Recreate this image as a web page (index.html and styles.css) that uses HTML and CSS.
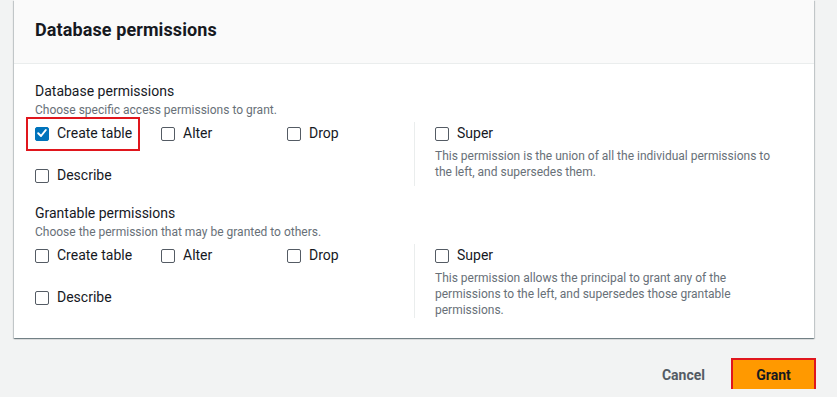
FILE: index.html
```html
<!DOCTYPE html>
<html lang="en">
<head>
<meta charset="utf-8">
<title>Database permissions</title>
<link rel="stylesheet" href="styles.css">
</head>
<body>
<div class="page">
  <section class="card">
    <header class="card-header">
      <h2 class="card-title">Database permissions</h2>
    </header>
    <div class="card-body">
      <div class="group">
        <div class="group-label">Database permissions</div>
        <div class="group-desc">Choose specific access permissions to grant.</div>
        <div class="perm-grid">
          <div class="perm-left">
            <label class="cb highlight"><span class="box checked"><svg viewBox="0 0 14 14" width="14" height="14"><path d="M3.2 7.3 L6 10 L10.8 4" fill="none" stroke="#fff" stroke-width="2" stroke-linecap="round" stroke-linejoin="round"/></svg></span><span class="cb-text">Create table</span></label>
            <label class="cb"><span class="box"></span><span class="cb-text">Alter</span></label>
            <label class="cb"><span class="box"></span><span class="cb-text">Drop</span></label>
            <label class="cb"><span class="box"></span><span class="cb-text">Describe</span></label>
          </div>
          <div class="perm-right">
            <label class="cb"><span class="box"></span><span class="cb-text">Super</span></label>
            <p class="super-desc">This permission is the union of all the individual permissions to the left, and supersedes them.</p>
          </div>
        </div>
      </div>
      <div class="group group-second">
        <div class="group-label">Grantable permissions</div>
        <div class="group-desc">Choose the permission that may be granted to others.</div>
        <div class="perm-grid">
          <div class="perm-left">
            <label class="cb"><span class="box"></span><span class="cb-text">Create table</span></label>
            <label class="cb"><span class="box"></span><span class="cb-text">Alter</span></label>
            <label class="cb"><span class="box"></span><span class="cb-text">Drop</span></label>
            <label class="cb"><span class="box"></span><span class="cb-text">Describe</span></label>
          </div>
          <div class="perm-right">
            <label class="cb"><span class="box"></span><span class="cb-text">Super</span></label>
            <p class="super-desc">This permission allows the principal to grant any of the permissions to the left, and supersedes those grantable permissions.</p>
          </div>
        </div>
      </div>
    </div>
  </section>
  <div class="actions">
    <button class="btn-link" type="button">Cancel</button>
    <button class="btn-primary" type="button">Grant</button>
  </div>
</div>
</body>
</html>
```
FILE: styles.css
```css
html, body {
  margin: 0;
  padding: 0;
}
body {
  background: #f2f3f3;
  font-family: Roboto, "Liberation Sans", Arial, sans-serif;
  color: #16191f;
  font-size: 14px;
  line-height: 22px;
}
.page {
  padding: 0 23px 0 14px;
}
.card {
  background: #fff;
  box-shadow: 0 1px 1px 0 rgba(0, 28, 36, 0.35), 1px 1px 1px 0 rgba(0, 28, 36, 0.15), -1px 1px 1px 0 rgba(0, 28, 36, 0.15);
}
.card-header {
  background: #fafafa;
  border-bottom: 1px solid #eaeded;
  padding: 19px 21px 21px;
  height: 23px;
}
.card-title {
  margin: 0;
  font-size: 18px;
  line-height: 22px;
  font-weight: 700;
  letter-spacing: 0.1px;
}
.card-body {
  padding: 16px 21px 20px;
}
.group-second {
  margin-top: 16px;
}
.group-label {
  font-size: 14px;
  line-height: 22px;
}
.group-desc {
  font-size: 12px;
  line-height: 16px;
  color: #687078;
}
.perm-grid {
  display: flex;
  margin-top: 4px;
}
.perm-left {
  width: 379px;
  display: grid;
  grid-template-columns: 126px 126px 126px;
  row-gap: 20px;
  align-content: start;
}
.perm-right {
  border-left: 1px solid #eaeded;
  padding-left: 20px;
  padding-right: 12px;
  flex: 1;
}
.cb {
  display: flex;
  align-items: center;
  height: 22px;
  gap: 8px;
  justify-self: start;
}
.box {
  box-sizing: border-box;
  width: 14px;
  height: 14px;
  border: 1.5px solid #545b64;
  border-radius: 2px;
  display: inline-flex;
  flex: none;
  margin-top: 1px;
}
.box.checked {
  background: #0073bb;
  border-color: #0073bb;
}
.box.checked svg {
  margin: -1.5px;
}
.cb-text {
  font-size: 14px;
}
.highlight {
  position: relative;
}
.highlight::after {
  content: "";
  position: absolute;
  left: -9px;
  right: -8px;
  top: -5px;
  bottom: -7px;
  border: 2px solid #e0161d;
}
.super-desc {
  margin: 4px 0 0;
  font-size: 12px;
  line-height: 16px;
  color: #687078;
}
.actions {
  display: flex;
  justify-content: flex-end;
  align-items: center;
  margin-top: 22px;
  gap: 28px;
}
.btn-link {
  border: none;
  background: none;
  font-family: inherit;
  font-size: 14px;
  font-weight: 700;
  color: #545b64;
  padding: 0;
}
.btn-primary {
  font-family: inherit;
  font-size: 14px;
  font-weight: 700;
  color: #16191f;
  background: #ff9900;
  border: none;
  outline: 2px solid #e0161d;
  width: 81px;
  height: 29px;
  padding: 0;
}
```
